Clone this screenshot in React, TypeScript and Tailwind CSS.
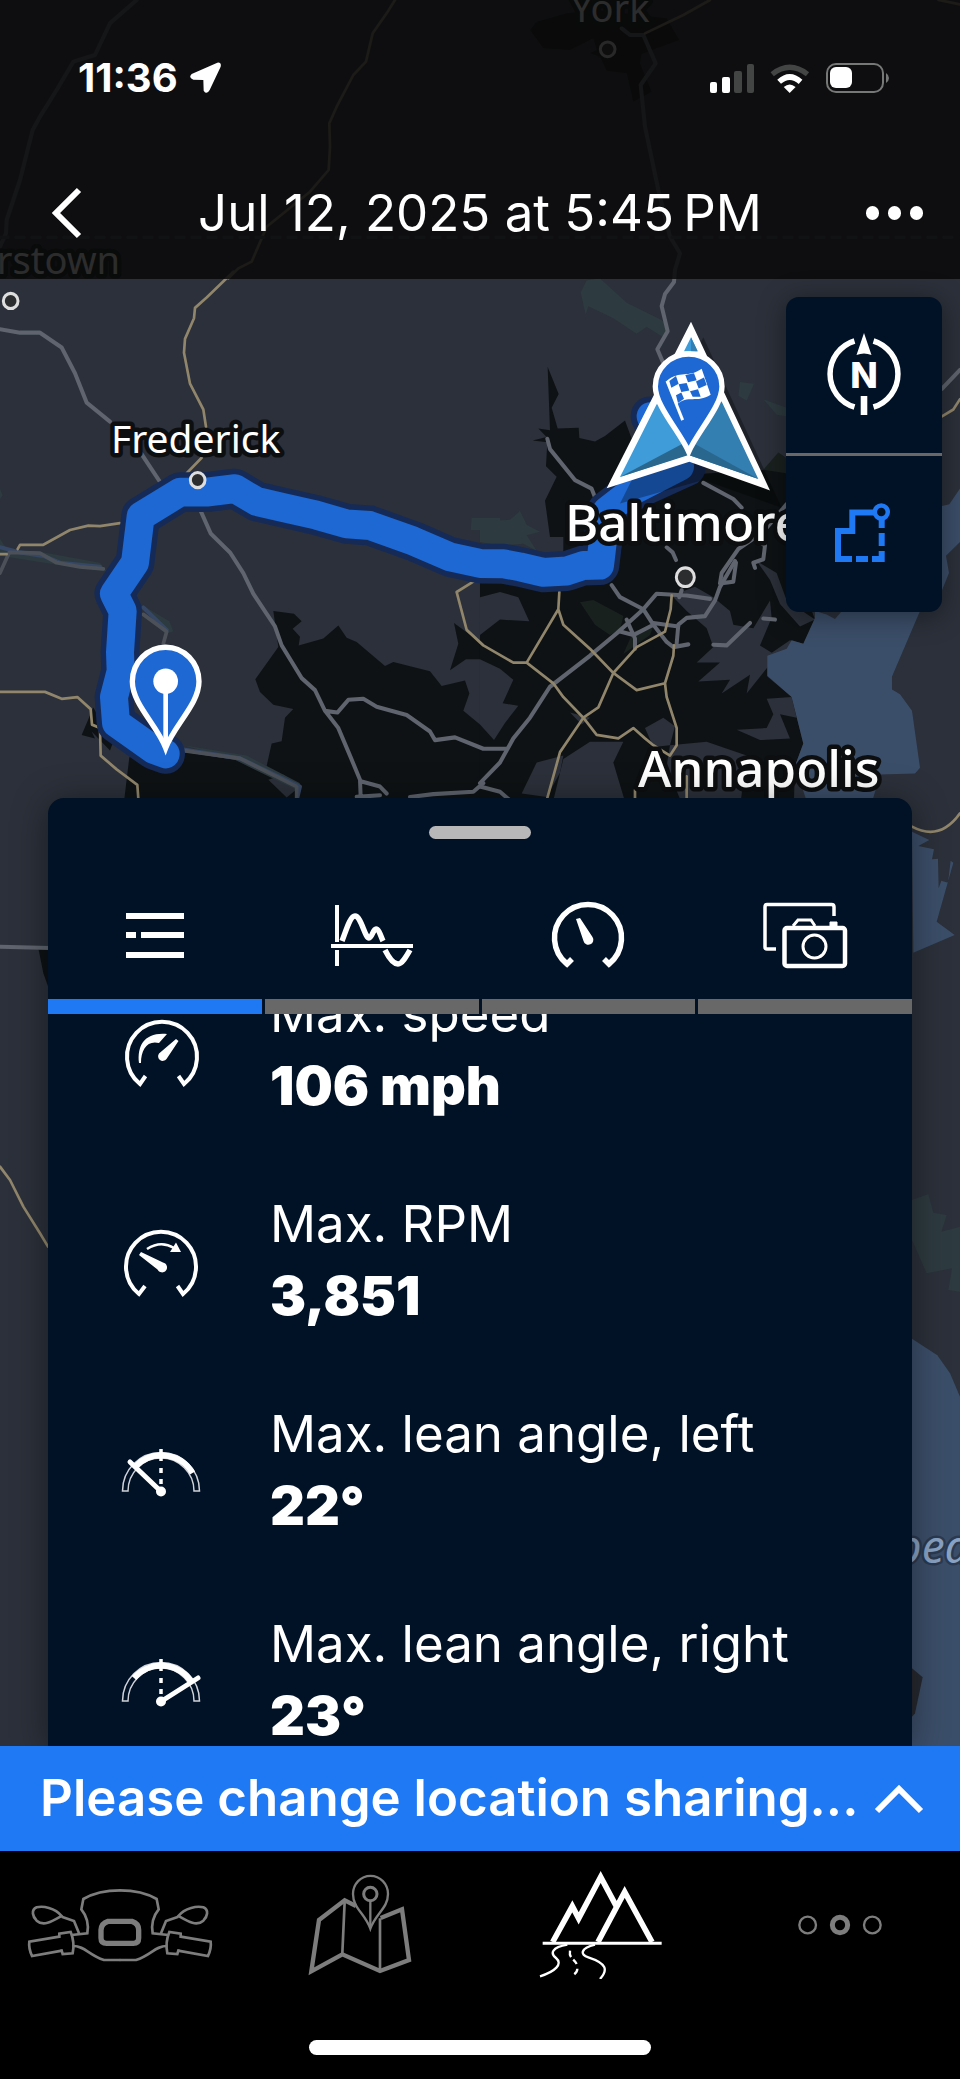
import React, { useState } from 'react'

function MapBackground() {
  return (
    <svg
      className="absolute inset-0 -z-10 size-full"
      viewBox="0 0 960 2079"
      preserveAspectRatio="xMidYMin slice"
      aria-hidden="true"
    >
      <rect width="960" height="2079" fill="#2b303a" />

      {/* North and south of the route */}
      <g transform="translate(0 270) scale(.33333)" fill="none" strokeLinejoin="round" strokeLinecap="round">
        <path d="M1590 -720 L1610 -745 1700 -770 1790 -780 2000 -755 2038 -690 1925 -648 1920 -620 1955 -535 1900 -505 1880 -590 1820 -598 1800 -640 1770 -650 1790 -660 1780 -695 1710 -660 1630 -665z" fill="#0e1214" />
        <path d="M115 2035 H150 V2165 L130 2110z" fill="#0e1214" />
        <g fill="#3b4e69">
          <path d="M2736 1685 L2788 1710 2755 1728 2802 1738 2796 1768 2814 1766 2816 1855 2824 1832 2844 1838 2852 1772 2860 1778 2810 1955 2864 1995 2740 2048z" />
          <path d="M2736 3206 L2812 3256 2850 3310 2880 3380 V4500 H2736z" />
        </g>
        <path d="M2736 2790 L2785 2772 2800 2828 2840 2835 2824 2885 2880 2870 V3065 L2845 3060 2856 2995 2780 3010 2736 2910z" fill="#2d3a3f" />
        <path d="M2736 4195 L2768 4222 2745 4330 2736 4340z" fill="#262930" />
        <g stroke="#5f646e" strokeWidth="12">
          <path d="M410 -810 L330 -740 285 -645 220 -625 170 -540 120 -460 98 -420 60 -270 20 -150 18 -110 0 -70" />
          <path d="M1865 -725 L1890 -705 1930 -705 1967 -620 1922 -555 1935 -430 1975 -240 2010 -100 2040 -50 2025 0" />
          <path d="M0 2030 L150 2034" />
        </g>
        <g stroke="#91866b" strokeWidth="8">
          <path d="M1185 -810 L1160 -770 1118 -710 1098 -625 1060 -585 1010 -490 988 -440 990 -370 986 -300 930 -235 850 -170 800 -130 755 -25 715 -5 685 25" />
          <path d="M1935 -710 L2050 -765 2130 -810 M2816 -810 L2880 -797" />
          <path d="M2736 1670 Q2820 1715 2880 1630 M0 2690 L30 2730 70 2810 120 2890 144 2930" />
        </g>
        <path d="M0 -98 H2880" stroke="#444b55" strokeWidth="10" strokeDasharray="24 24" />
        <circle cx="1823" cy="-662" r="22" fill="#2c2d2f" stroke="#dedede" strokeWidth="9" />
      </g>

      <g transform="translate(0 270) scale(.33333 .3444)" fill="none" strokeLinejoin="round" strokeLinecap="round">
        {/* Urban areas */}
        <g fill="#0e1214">
          <path d="M820 990 L882 998 905 1020 878 1042 900 1065 896 1090 970 1070 1015 1032 1040 1068 1070 1080 1155 1150 1180 1138 1290 1165 1325 1208 1395 1192 1408 1230 1390 1280 1440 1320 L1500 1400 L1500 1600 L365 1600 L388 1415 L560 1400 L720 1425 L800 1440 L815 1375 845 1368 855 1300 880 1275 820 1262 780 1225 766 1188 835 1095z" />
          <path d="M1362 1025 L1440 1080 V1130 L1398 1130 1350 1162 1375 1085z" />
          <path d="M280 1270 L245 1350 285 1360 275 1340 330 1395 340 1370z" />
          <path d="M1643 282 L1676 360 1655 400 1673 460 1736 458 1738 488 1785 498 1815 482 1875 437 1895 490 1960 600 2310 580 2350 560 2400 620 2400 900 2445 1015 2410 1085 2370 1075 2302 1120 V1180 L2375 1240 2410 1375 2385 1440 2380 1600 1440 1600 V890 L1690 860 V775 L1650 775 1635 670 1670 600 1638 570 1642 500 1598 495 1640 485 1615 460 1650 465z" />
        </g>
        <g fill="#2b303a">
          <path d="M1440 950 L1500 935 1555 950 1588 1020 1500 1015 1440 1060z" />
          <path d="M1440 1130 L1500 1158 1540 1190 1508 1258 1555 1265 1515 1315 1482 1365 1440 1320z" />
          <path d="M1690 1410 L1610 1430 1565 1520 1640 1530 1680 1460z" />
          <path d="M1660 1540 L1690 1420 1770 1370 1870 1370 1840 1430 1880 1560z" />
          <path d="M1710 1285 L1770 1300 1745 1320z M1935 1330 L1990 1300 2025 1325 2010 1380 1960 1385z" />
          <path d="M2015 945 L2085 920 2140 950 2190 990 2200 1030 2260 1040 2310 960 2315 1010 2280 1090 2330 1120 2240 1230 2250 1175 2165 1230 2190 1190 2095 1195 2160 1140 2090 1140 2140 1095 2120 1040 2060 990z" />
          <path d="M2270 845 L2330 880 2360 960 2445 1015 2400 1035 2340 970 2310 900z" />
          <path d="M2300 1245 L2375 1240 2390 1300 2340 1290 2370 1360 2280 1365 2210 1335 2300 1330 2320 1290z" />
          <path d="M2010 1380 L2120 1370 2240 1410 2220 1560 2050 1560 2000 1440z" />
          <path d="M805 1480 L850 1465 900 1500 860 1532z" />
        </g>

        {/* Forest and parks */}
        <g fill="#2d3a3f">
          <path d="M1760 30 L1800 25 1880 95 1985 145 2005 165 1990 195 1940 165 1910 185 1840 140 1765 105 1757 130 1742 65z" />
          <path d="M1440 730 L1530 725 1560 700 1580 740 1620 760 1580 770 1610 815 1570 795 1500 800 1440 790z" />
          <path d="M2220 325 L2262 330 2240 380 2215 365z M2290 375 L2360 400 2358 425 2330 420z" />
          <path d="M430 975 L508 1020 520 1050 500 1055z M0 780 L20 810 120 818 300 850 320 875 200 860 0 830z" />
          <path d="M550 1380 L740 1410 900 1490 890 1510 700 1420z M0 635 L8 655 0 665z" />
          <path d="M1415 720 H1500 V755 H1412z" />
        </g>
        <g fill="#19211f">
          <path d="M1740 965 L1780 958 1870 1005 1860 1045 1830 1060 1785 1030z M1900 1050 L1960 1035 1950 1060 1870 1115z" />
          <path d="M2290 580 L2335 530 2358 545 V590z" />
        </g>

        {/* Water */}
        <g fill="#3b4e69">
          <path d="M2302 1120 L2360 1100 2375 1075 2410 1085 2445 1010 2445 990 2480 1000 2505 1013 2530 985 2760 990 2676 1180 V1218 L2700 1232 2736 1280 2760 1445 2745 1462 2640 1465 2600 1600 2440 1600 2385 1440 2410 1375 2375 1240 2302 1178z" />
          <path d="M2826 685 L2848 680 2890 620 V780 L2838 830 2847 880 2826 930z" />
        </g>

        {/* Rivers */}
        <path d="M0 805 L60 820 130 830 180 850 300 862 M430 980 L500 1045 M545 1392 L720 1418 L900 1500 890 1540" stroke="#354764" strokeWidth="12" />
        <path d="M0 880 L28 820 120 822 170 850 240 862 310 868 M430 1000 L500 1050 490 1085 M545 1395 L720 1418 L890 1500 V1540" stroke="#4c5159" strokeWidth="11" />

        {/* Highways */}
        <g stroke="#5f646e" strokeWidth="12">
          <path d="M0 172 L60 182 120 182 185 225 225 300 260 385 330 440 M425 535 L480 615 M600 695 L632 765 690 820 730 880 760 940 825 1035 845 1090 905 1185 945 1220 975 1280 1015 1330 1050 1410 1080 1480 1082 1530 M975 1280 L1012 1285 1045 1248 1090 1245 1130 1268 1220 1292 1290 1340 1305 1365 1365 1357 1450 1390 1520 1390 M1085 1485 L1140 1500 1160 1520 M1070 1530 L1140 1525 M1230 1530 L1300 1522 1420 1515 1450 1490" />
          <path d="M2025 0 L2022 35 1995 70 1985 105 2003 178 1972 230 1994 280 1998 360" />
          <path d="M1642 490 L1650 520 1725 610 1775 635 1785 660 M2000 805 L2018 820 2028 842 M2110 618 L2200 665 2225 690 M2360 680 L2290 760 2215 810 2165 880 2160 910 2200 905 2208 850 M2230 760 L2295 800 2290 840 2260 850 2265 865" />
          <path d="M1835 915 L1860 950 1930 985 1970 940 2060 945 2130 955 M2205 845 L2160 920 2145 960 2115 1005 2060 1010 2035 1030 2030 1085 M2045 930 L2038 950 M1930 985 L1850 1055 1770 1120 1650 1210 1590 1300 1540 1360 1500 1430 1440 1490 M1930 985 L1960 1030 2000 1080 2020 1095 2065 1087 M1960 1025 L2035 1035 M1860 1050 L1900 1060 1960 1030 M1880 1015 L1905 1070 1905 1100 M2140 1088 L2180 1090 2250 1025 M2290 1012 L2325 1015 M1440 1500 L1500 1515 1530 1540" />
          <path d="M2826 345 L2880 290" />
        </g>
        <g stroke="#91866b" strokeWidth="8">
          <path d="M700 5 L620 80 585 110 582 140 555 200 552 240 570 330 610 405 618 455 M605 545 L560 590" />
          <path d="M360 735 L300 744 265 742 210 755 130 798 60 798 53 810 M0 825 H20 M0 1225 H135 L185 1245 232 1240 272 1275 276 1320 300 1330 302 1410 350 1450 412 1495 415 1535" />
          <path d="M1420 905 L1370 935 1400 1045 1450 1090 1540 1140 1580 1140 M1678 935 L1675 985 1580 1140 L1660 1200 1690 1240 1750 1300 1790 1350 1855 1360 1900 1330 1935 1360 1960 1380 2010 1410 2030 1380 2030 1330 2000 1240 1995 1200 M1675 985 L1690 1030 1770 1100 1840 1170 1910 1220 1995 1200 2020 1120 2022 1090 M2015 945 L2012 985 1995 1050 1910 1095 1840 1170 1795 1270 1750 1300 1680 1400 1640 1540" />
          <path d="M1905 1510 V1540 M2060 1470 V1540 M2826 425 L2860 405 2880 375" />
        </g>

        {/* Recorded route */}
        <g stroke="#152a57" strokeWidth="116">
          <path d="M497 1405 L460 1392 348 1315 342 1240 362 1165 360 1110 368 990 342 940 405 850 422 715 540 645 620 645 705 635 770 672 850 690 950 712 1040 737 1110 742 1240 787 1350 833 1440 852 1510 853 1560 862 1630 878 1700 874 1750 858 1800 857 1812 760 1820 700 1900 640 2060 570" />
          <path d="M2000 520 L1950 425 H2000" />
        </g>
        <g stroke="#1d68d3" strokeWidth="84">
          <path d="M497 1405 L460 1392 348 1315 342 1240 362 1165 360 1110 368 990 342 940 405 850 422 715 540 645 620 645 705 635 770 672 850 690 950 712 1040 737 1110 742 1240 787 1350 833 1440 852 1510 853 1560 862 1630 878 1700 874 1750 858 1800 857 1812 760 1820 700 1900 640 2040 570" />
          <path d="M2000 520 L1952 425 H2000" />
        </g>

        {/* Towns */}
        <g fill="#2c2d2f" stroke="#dedede" strokeWidth="9">
          <circle cx="32" cy="90" r="22" />
          <circle cx="593" cy="610" r="22" />
          <circle cx="2056" cy="892" r="27" />
        </g>
      </g>

      <g
        className="[font-family:'Noto_Sans','Open_Sans',sans-serif] [paint-order:stroke]"
        fill="#ffffff"
        stroke="#0c0e10"
        strokeWidth="9"
        strokeLinejoin="round"
      >
        <text x="571" y="22" fontSize="38">York</text>
        <text x="120" y="274" fontSize="38" textAnchor="end">Hagerstown</text>
        <text x="111" y="453" fontSize="39">Frederick</text>
        <text x="565" y="541" fontSize="51" fontWeight="500">Baltimore</text>
        <text x="638" y="787" fontSize="51" fontWeight="500">Annapolis</text>
        <text x="895" y="1563" fontSize="46" fontStyle="italic" fill="#89a2c2" stroke="#2b3a50" strokeWidth="5">pea</text>
      </g>

      {/* Start and finish markers */}
      <g transform="translate(0 270) scale(.33333 .3444)">
        <path d="M497 1388 C470 1320 397 1260 397 1195 A100 100 0 0 1 597 1195 C597 1260 524 1320 497 1388z" fill="#1d68d3" stroke="#fff" strokeWidth="16" />
        <circle cx="497" cy="1194" r="37" fill="#fff" />
        <path d="M497 1194 V1385" stroke="#fff" strokeWidth="14" />

        <path d="M2110 195 L2345 690 2110 610 1860 678z" fill="#000" opacity=".3" />
        <path d="M2073 150 L2310 640 2068 557 1820 634z" fill="#fff" />
        <path d="M2073 195 L2052 236 H2093z M1970 390 L1860 601 2066 535 2066 390z" fill="#3f9cd9" />
        <path d="M2165 382 L2275 607 2066 537 V390z M2073 195 L2093 236 H2073z" fill="#347fb1" />
        <path d="M1860 601 L2066 495 2275 607 2066 537z" fill="#29678f" />
        <path d="M2066 528 C2040 470 1966 395 1966 338 A100 94 0 0 1 2166 338 C2166 395 2092 470 2066 528z" fill="#1d68d3" stroke="#fff" strokeWidth="16" />
        <path d="M2001 322 L2048 436" stroke="#fff" strokeWidth="9" />
        <path d="M2000 322 C2040 290 2065 315 2105 287 L2132 362 C2090 388 2065 360 2028 392z" fill="#fff" />
        <path d="M2008 322 L2028 308 2036 330 2014 342z M2056 305 L2082 300 2090 320 2064 326z M2036 332 L2060 328 2068 350 2044 354z M2088 324 L2112 312 2120 334 2096 344z M2028 364 L2044 356 2052 374 2034 386z M2070 352 L2094 346 2102 368 2078 368z" fill="#1d68d3" />
      </g>
    </svg>
  )
}

function StatusBar() {
  return (
    <div className="flex h-15 items-center justify-between pl-[78px] pr-[70px]">
      <div className="flex items-center gap-3">
        <span className="text-[40px] leading-none font-bold">11:36</span>
        <svg className="size-8" viewBox="578 188 96 96" fill="#fff" aria-hidden="true">
          <path d="M660 190 Q673 188 670 202 L637 272 Q628 288 619 274 L618 242 L588 241 Q572 236 583 224z" />
        </svg>
      </div>
      <div className="flex items-center gap-4">
        <svg className="h-[29px] w-11" viewBox="0 0 44 29" aria-hidden="true">
          <g fill="#fff">
            <rect y="18" width="7" height="11" rx="2" />
            <rect x="12" y="13" width="8" height="16" rx="2" />
          </g>
          <g fill="#434444">
            <rect x="24" y="7" width="8" height="22" rx="2" />
            <rect x="37" width="7" height="29" rx="2" />
          </g>
        </svg>
        <svg className="h-[29px] w-10" viewBox="873 188 120 88" fill="none" aria-hidden="true">
          <path d="M879 219 Q932 177 986 219" stroke="#434444" strokeWidth="16" />
          <path d="M900 242 Q932 213 965 242" stroke="#fff" strokeWidth="17" />
          <path d="M932 276 L914 258 Q932 242 950 258z" fill="#fff" />
        </svg>
        <svg className="h-[30px] w-16" viewBox="0 0 64 30" aria-hidden="true">
          <rect x="1" y="1" width="56" height="28" rx="9" fill="none" stroke="#767777" strokeWidth="2" />
          <rect x="4" y="4" width="22" height="21" rx="6" fill="#fff" />
          <path d="M60 10 Q63 12 63 15 Q63 18 60 20z" fill="#767777" />
        </svg>
      </div>
    </div>
  )
}

const tabs = [
  {
    name: 'Details',
    icon: (
      <g strokeWidth="6">
        <path d="M19 29 H77 M19 48 H29 M34 48 H77 M19 68 H77" />
      </g>
    ),
  },
  {
    name: 'Chart',
    icon: (
      <>
        <path d="M13 18 V55 M13 63 V79 M7 59 H89" strokeWidth="4" />
        <path d="M18 54 C22 44 26 29 31 29 C37 29 41 51 45 51 C48 51 49 42 52 42 C55 42 57 50 59 54 M61 63 C65 71 69 77 74 77 C78 77 82 70 86 63" strokeWidth="5.5" />
      </>
    ),
  },
  {
    name: 'Gauges',
    icon: (
      <>
        <path d="M32 72 L27 77 A33.5 33.5 0 1 1 69 77 L64 72" strokeWidth="5.5" />
        <path d="M36 32 L40 31 52.5 50 A5 5 0 1 1 43.5 54z" fill="#fff" stroke="none" />
      </>
    ),
  },
  {
    name: 'Photos',
    icon: (
      <>
        <path d="M77 29 V20 Q77 17.5 74.5 17.5 H10 Q8 17.5 8 20 V60 Q8 62 10 62 H19" strokeWidth="3.5" />
        <rect x="27.5" y="41" width="60.5" height="38" rx="2.5" strokeWidth="4.5" />
        <path d="M36 39 L41 33 H54 L58 39" strokeWidth="3" />
        <path d="M73 35 H80 V40 H73z" fill="#fff" strokeWidth="1" />
        <circle cx="57.5" cy="59.5" r="11.5" strokeWidth="3" />
      </>
    ),
  },
]

const stats = [
  {
    label: 'Max. speed',
    value: '106 mph',
    icon: (
      <>
        <path d="M24.5 66 L19 74 A35 35 0 1 1 63 74 L57.5 66" strokeWidth="4" />
        <path d="M18 53 C16 35 24 22 46 24 L38 33 C26 30 20 40 20 53z" fill="#fff" stroke="none" />
        <path d="M55 29 L57.5 31 45.5 49 A4.5 4.5 0 1 1 38 43.5z" fill="#fff" stroke="none" />
      </>
    ),
  },
  {
    label: 'Max. RPM',
    value: '3,851',
    icon: (
      <>
        <path d="M24 66 L18 74 A35 35 0 1 1 62 74 L56.5 66" strokeWidth="4" />
        <path d="M26 29 Q40 20 53 28" strokeWidth="2.5" />
        <path d="M49 32 H60 L55 22.5z M18 35 L20 32 42 42.5 A5 5 0 1 1 36.5 49.5z" fill="#fff" stroke="none" />
      </>
    ),
  },
  {
    label: 'Max. lean angle, left',
    value: '22°',
    icon: (
      <>
        <path d="M1.5 61 A38.5 38.5 0 0 1 78.5 61 H73 A33 33 0 0 0 7 61z" strokeWidth="1.5" stroke="#cfd2d8" />
        <path d="M15 36 A36 36 0 0 1 71.5 43" strokeWidth="6" />
        <path d="M40 19 V31 M40 38 V43 M40 49 V54" strokeWidth="3.5" />
        <path d="M9 32 L40 61.5" strokeWidth="5" strokeLinecap="round" />
        <circle cx="40" cy="61.5" r="5" fill="#fff" stroke="none" />
      </>
    ),
  },
  {
    label: 'Max. lean angle, right',
    value: '23°',
    icon: (
      <>
        <path d="M1.5 61 A38.5 38.5 0 0 1 78.5 61 H73 A33 33 0 0 0 7 61z" strokeWidth="1.5" stroke="#cfd2d8" />
        <path d="M13 38 A36 36 0 0 1 71 43" strokeWidth="6" />
        <path d="M40 19 V31 M40 38 V43 M40 49 V54" strokeWidth="3.5" />
        <path d="M77 38 L40 61.5" strokeWidth="5" strokeLinecap="round" />
        <circle cx="40" cy="61.5" r="5" fill="#fff" stroke="none" />
      </>
    ),
  },
]

function HandlebarSide() {
  return (
    <>
      <path d="M215 585 L262 580 C268 545 258 525 244 508 L250 477 C280 459 322 451 361 451" />
      <path d="M185 528 C165 503 128 497 110 502 C92 510 98 530 110 542 C130 560 155 545 185 528z" />
      <path d="M185 530 L222 543 L237 580" />
      <path d="M178 590 L88 605 C86 620 90 635 96 648 L186 632" />
      <path d="M178 594 L178 581 L212 576 C222 600 222 620 218 640 L188 642 L184 628" />
      <path d="M220 618 C255 618 265 645 312 660 H361" />
    </>
  )
}

const navItems = [
  {
    name: 'Ride',
    viewBox: '72 381 576 336',
    icon: (
      <g strokeWidth="8">
        <HandlebarSide />
        <g transform="translate(720 0) scale(-1 1)">
          <HandlebarSide />
        </g>
        <path d="M324 544 H396 Q416 550 416 570 V594 Q416 610 400 610 H320 Q303 610 303 594 V570 Q304 550 324 544z" strokeWidth="16" />
      </g>
    ),
  },
  {
    name: 'Map',
    viewBox: '792 381 576 336',
    icon: (
      <>
        <path d="M1068 498 L1034 481 957 540 934 694 1027 643 1140 693 1227 660 1206 508 1142 534" strokeWidth="13" />
        <path d="M1034 485 L1027 640 M1140 535 V690" strokeWidth="8" />
        <path d="M1111 566 C1095 520 1059 505 1059 462 A52 54 0 0 1 1164 462 C1164 505 1127 520 1111 566z" strokeWidth="7" />
        <circle cx="1111" cy="462" r="20" strokeWidth="9" />
        <path d="M1111 482 V560" strokeWidth="7" />
      </>
    ),
  },
  {
    name: 'My rides',
    viewBox: '72 381 576 336',
    icon: (
      <>
        <path d="M218 606 L277 499 296 535 362 411 408 497 M354 606 L434 456 516 606" strokeWidth="17" />
        <path d="M188 610 H545" strokeWidth="9" />
        <path d="M262 614 C215 622 210 640 228 654 C250 672 225 695 180 709 M345 614 C300 625 300 645 325 652 C380 670 385 690 360 717" strokeWidth="7" />
        <path d="M270 632 C266 655 282 656 290 672 M292 686 Q292 698 278 706" strokeWidth="7" strokeDasharray="20 10" />
      </>
    ),
  },
  {
    name: 'More',
    viewBox: '792 381 576 336',
    icon: (
      <>
        <circle cx="983" cy="555" r="25" strokeWidth="7" />
        <circle cx="1080" cy="555" r="23" strokeWidth="15" />
        <circle cx="1177" cy="555" r="25" strokeWidth="7" />
      </>
    ),
  },
]

function App() {
  const [tab, setTab] = useState('Details')
  const [page, setPage] = useState('My rides')

  return (
    <div className="relative isolate flex min-h-screen flex-col overflow-hidden font-['Inter','Liberation_Sans',sans-serif] text-white">
      <MapBackground />

      <header className="bg-[rgba(9,9,9,0.86)] pt-12 pb-[13px]">
        <StatusBar />
        <div className="mt-[52px] flex h-[106px] items-center px-[18px]">
          <button type="button" aria-label="Back" className="flex size-24 items-center justify-center">
            <svg className="h-14 w-9" viewBox="0 0 36 56" fill="none" stroke="#fff" strokeWidth="6" aria-hidden="true">
              <path d="M31 5 L8 28 L31 51" />
            </svg>
          </button>
          <h1 className="flex-1 text-center text-[51px] whitespace-nowrap">Jul 12, 2025 at 5:45&#8239;PM</h1>
          <button type="button" aria-label="More options" className="flex size-24 items-center justify-center gap-[9px]">
            <span className="h-[14px] w-[13px] rounded-full bg-white" />
            <span className="h-[14px] w-[13px] rounded-full bg-white" />
            <span className="h-[14px] w-[13px] rounded-full bg-white" />
          </button>
        </div>
      </header>

      <main className="flex flex-1 flex-col">
        <div className="mt-[18px] mr-[18px] flex flex-col self-end overflow-hidden rounded-[13px] bg-[#011126] shadow-[0_4px_28px_rgba(0,0,0,0.4)]">
          <button type="button" aria-label="North up" className="flex size-39 items-center justify-center">
            <svg className="size-24" viewBox="0 0 96 96" fill="#fff" aria-hidden="true">
              <path d="M38.5 14 A34.5 34.5 0 0 0 38.5 80 M57.5 14 A34.5 34.5 0 0 1 57.5 80" fill="none" stroke="#fff" strokeWidth="5.5" />
              <path d="M48 6 L55.5 28 Q48 25 40.5 28z M44.7 69 H51.3 V88 H44.7z" />
              <text x="48" y="61" textAnchor="middle" fontSize="36" fontWeight="800">N</text>
            </svg>
          </button>
          <div className="h-[3px] bg-[#686868]" />
          <button type="button" aria-label="Show route" className="flex size-39 items-center justify-center">
            <svg className="size-24" viewBox="0 0 96 96" fill="none" stroke="#1f78f4" strokeWidth="6" aria-hidden="true">
              <path d="M36 73 H22 V45 H36.3 V26.500 H59" />
              <circle cx="65.3" cy="26" r="6.5" strokeWidth="4.5" />
              <path d="M65.7 33 V42 M65.7 47 V60 M65.7 65 V73 H56 M40 73 H52" />
            </svg>
          </button>
        </div>

        <section className="mx-12 mt-[186px] flex flex-1 flex-col overflow-hidden rounded-t-[16px] bg-[#011126] shadow-[0_4px_36px_rgba(0,0,0,0.4)]">
          <div className="mx-auto mt-7 h-[13px] w-[102px] rounded-full bg-[#b8b8b8]" />
          <div role="tablist" className="relative z-10 grid grid-cols-4 gap-[3px]">
            {tabs.map(t => (
              <button
                key={t.name}
                type="button"
                role="tab"
                aria-label={t.name}
                aria-selected={tab === t.name}
                onClick={() => setTab(t.name)}
                className="flex cursor-pointer flex-col items-center pt-12"
              >
                <svg className="size-24" viewBox="0 0 96 96" fill="none" stroke="#fff" aria-hidden="true">
                  {t.icon}
                </svg>
                <span className={tab === t.name ? 'mt-4 h-[15px] w-full bg-[#1f78f4]' : 'mt-4 h-[15px] w-full bg-[#686868]'} />
              </button>
            ))}
          </div>

          <div className="h-[732px] overflow-hidden">
            {/* list is scrolled a little, first label sits under the tabs */}
            <ul className="-mt-9 flex flex-col gap-[66px]">
              {stats.map(s => (
                <li key={s.label} className="flex items-center gap-[69px] pl-[73px]">
                  <svg className="size-20 shrink-0" viewBox="0 0 80 80" fill="none" stroke="#fff" aria-hidden="true">
                    {s.icon}
                  </svg>
                  <div className="leading-[72px] whitespace-nowrap">
                    <p className="text-[51px]">{s.label}</p>
                    <p className="text-[54px] font-black">{s.value}</p>
                  </div>
                </li>
              ))}
            </ul>
          </div>
        </section>
      </main>

      <button type="button" className="flex h-[105px] items-center justify-between bg-[#1f78f4] pr-9 pl-10 text-left">
        <span className="text-[51px] font-semibold whitespace-nowrap">Please change location sharing...</span>
        <svg className="h-8 w-[50px] shrink-0" viewBox="0 0 50 32" fill="none" stroke="#fff" strokeWidth="6" aria-hidden="true">
          <path d="M3 28 L25 6 L47 28" />
        </svg>
      </button>

      <nav className="bg-black pb-6">
        <div className="grid grid-cols-4 pt-4">
          {navItems.map(n => (
            <button
              key={n.name}
              type="button"
              aria-label={n.name}
              onClick={() => setPage(n.name)}
              className={page === n.name ? 'flex cursor-pointer justify-center text-white' : 'flex cursor-pointer justify-center text-[#7d7d7d]'}
            >
              <svg className="h-28 w-48" viewBox={n.viewBox} fill="none" stroke="currentColor" aria-hidden="true">
                {n.icon}
              </svg>
            </button>
          ))}
        </div>
        <div className="mx-auto mt-[61px] h-[15px] w-[342px] rounded-full bg-white" />
      </nav>
    </div>
  )
}

export default App
